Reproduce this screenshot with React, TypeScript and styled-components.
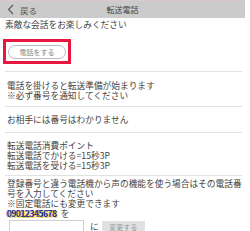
import React from "react";
import styled, { createGlobalStyle } from "styled-components";

const GlobalStyle = createGlobalStyle`
  body {
    margin: 0;
    background: #fff;
    font-family: "Noto Sans CJK JP", "Noto Sans", sans-serif;
    color: #444;
  }
`;

const Page = styled.div`
  width: 245px;
  height: 231px;
  overflow: hidden;
`;

const Header = styled.header`
  position: relative;
  display: flex;
  align-items: center;
  height: 18px;
  background: #cbcbcb;
  border-top: 1px solid #d9c9c9;
  box-sizing: border-box;
`;

const BackLink = styled.a`
  display: flex;
  align-items: center;
  gap: 6px;
  padding-left: 7px;
  font-size: 8.5px;
  color: #555;
  text-decoration: none;
`;

const Title = styled.div`
  position: absolute;
  left: 0;
  right: 0;
  text-align: center;
  font-size: 8px;
  color: #444;
  pointer-events: none;
`;

const Section = styled.section<{ $pad?: string }>`
  padding: ${(p) => p.$pad || "8px 6px 6px"};
  font-size: 8.7px;
  line-height: 10px;
  white-space: nowrap;
`;

const Divider = styled.hr`
  margin: 0 3px 0 5px;
  border: none;
  border-top: 1px solid #e2e2e2;
`;

const HighlightBox = styled.div`
  width: 68px;
  height: 25px;
  margin-top: 9px;
  margin-left: -2px;
  border: 3px solid #e8173f;
  box-sizing: border-box;
  display: flex;
  align-items: center;
  justify-content: center;
`;

const PillButton = styled.button`
  width: 58px;
  height: 14px;
  padding: 0;
  border: 1px solid #bdbdbd;
  border-radius: 8px;
  background: #fff;
  color: #888;
  font-family: inherit;
  font-size: 7px;
  line-height: 12px;
`;

const MaskedLine = styled.div`
  display: flex;
  align-items: center;
  height: 10px;
`;

const Masked = styled.span`
  font-weight: bold;
  line-height: 10px;
  letter-spacing: -0.6px;
  color: #1d3c8f;
  filter: blur(0.7px);
  text-shadow: 1px 1px 0 #f0d640, -1px 0 0 #e05aa0;
  margin-right: 4px;
`;

const InputRow = styled.div`
  display: flex;
  align-items: center;
  gap: 6px;
  margin-top: 1px;
  margin-left: 2px;
`;

const NumberInput = styled.input`
  width: 75px;
  height: 13px;
  box-sizing: border-box;
  border: 1px solid #cfcfcf;
  padding: 0 2px;
`;

const ChangeButton = styled.button`
  width: 43px;
  height: 12px;
  margin-left: -3px;
  padding: 0;
  border: none;
  background: #e1e1e1;
  color: #999;
  font-family: inherit;
  font-size: 7px;
  line-height: 12px;
`;

export default function App() {
  return (
    <Page>
      <GlobalStyle />
      <Header>
        <BackLink href="#">
          <svg width="7" height="11" viewBox="0 0 7 11">
            <path d="M6 1 L1.5 5.5 L6 10" fill="none" stroke="#555" strokeWidth="1.1" />
          </svg>
          戻る
        </BackLink>
        <Title>転送電話</Title>
      </Header>

      <Section $pad="2px 5px 7px">
        素敵な会話をお楽しみください
        <HighlightBox>
          <PillButton>電話をする</PillButton>
        </HighlightBox>
      </Section>
      <Divider />

      <Section $pad="9px 7px 5px">
        電話を掛けると転送準備が始まります
        <br />
        ※必ず番号を通知してください
      </Section>
      <Divider />

      <Section $pad="8px 7px 7px">お相手には番号はわかりません</Section>
      <Divider />

      <Section $pad="8px 7px 4px">
        転送電話消費ポイント
        <br />
        転送電話でかける=15秒3P
        <br />
        転送電話を受ける=15秒3P
      </Section>
      <Divider />

      <Section $pad="3px 7px 0">
        登録番号と違う電話機から声の機能を使う場合はその電話番
        <br />
        号を入力してください
        <br />
        ※固定電話にも変更できます
        <MaskedLine>
          <Masked>09012345678</Masked>を
        </MaskedLine>
        <InputRow>
          <NumberInput type="tel" />
          に
          <ChangeButton>変更する</ChangeButton>
        </InputRow>
      </Section>
    </Page>
  );
}
